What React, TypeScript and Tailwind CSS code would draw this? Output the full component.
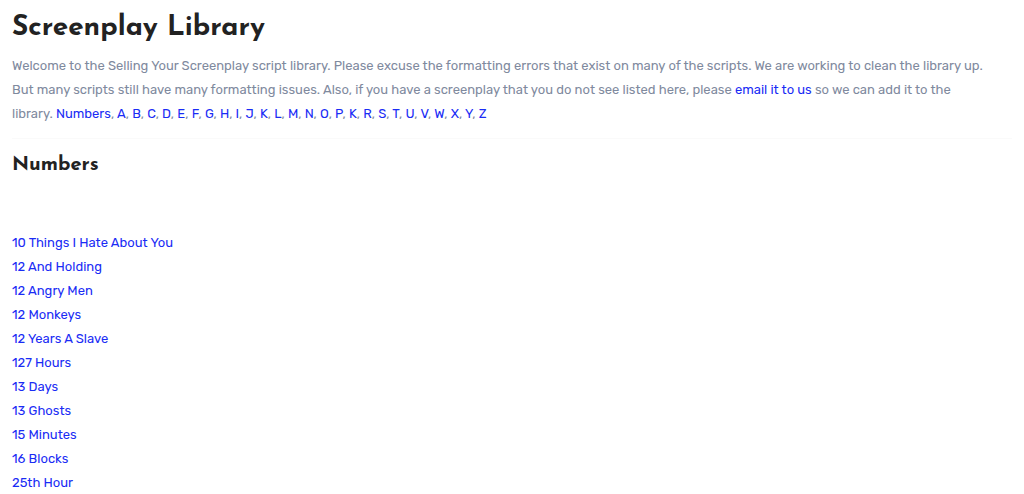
import { Fragment } from "react";

const letters = ["A","B","C","D","E","F","G","H","I","J","K","L","M","N","O","P","K","R","S","T","U","V","W","X","Y","Z"];

const scripts = [
  "10 Things I Hate About You",
  "12 And Holding",
  "12 Angry Men",
  "12 Monkeys",
  "12 Years A Slave",
  "127 Hours",
  "13 Days",
  "13 Ghosts",
  "15 Minutes",
  "16 Blocks",
  "25th Hour",
];

export default function App() {
  return (
    <main className="bg-white px-3 pt-2 font-['Rubik',Roboto,sans-serif] text-[13px] leading-6 text-[#7f8a9e]">
      <h1 className="pt-0.5 font-['Josefin_Sans',Lato,sans-serif] text-[28px] leading-9 font-bold text-[#222]">
        Screenplay Library
      </h1>
      <p className="mt-2 pr-5">
        Welcome to the Selling Your Screenplay script library. Please excuse the formatting errors that exist on many of the scripts. We are working to clean the library up. But many scripts still have many formatting issues. Also, if you have a screenplay that you do not see listed here, please{" "}
        <a href="#contact" className="text-[#1a2cf5]">email it to us</a> so we can add it to the library.{" "}
        <a href="#numbers" className="text-[#1a2cf5]">Numbers</a>
        {letters.map((letter, i) => (
          <Fragment key={i}>
            {", "}
            <a href={`#${letter}`} className="text-[#1a2cf5]">{letter}</a>
          </Fragment>
        ))}
      </p>
      <hr className="mt-3 border-[#fafafa]" />
      <h2 id="numbers" className="mt-3 font-['Josefin_Sans',Lato,sans-serif] text-[20px] leading-7 font-bold text-[#222]">
        Numbers
      </h2>
      <ul className="mt-13">
        {scripts.map((title) => (
          <li key={title}>
            <a href="#script" className="text-[#1a2cf5]">{title}</a>
          </li>
        ))}
      </ul>
    </main>
  );
}
